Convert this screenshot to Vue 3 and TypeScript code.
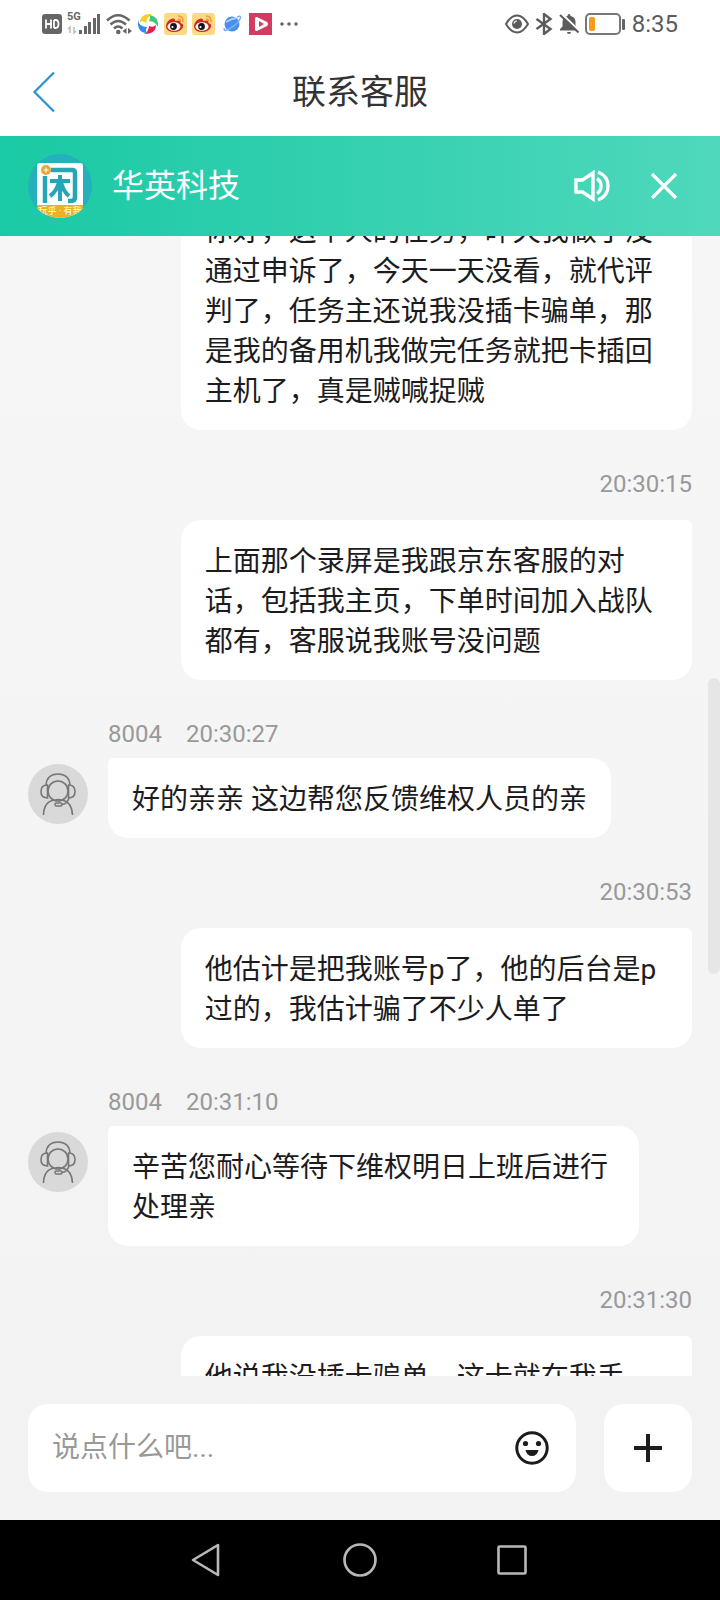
<script setup lang="ts">
import { onMounted, ref } from 'vue'

interface Message {
  id: number
  mine: boolean
  time?: string
  agent?: string
  text: string
}

const messages: Message[] = [
  { id: 1, mine: true, text: '你好，这个人的任务，昨天我做了没通过申诉了，今天一天没看，就代评判了，任务主还说我没插卡骗单，那是我的备用机我做完任务就把卡插回主机了，真是贼喊捉贼' },
  { id: 2, mine: true, time: '20:30:15', text: '上面那个录屏是我跟京东客服的对话，包括我主页，下单时间加入战队都有，客服说我账号没问题' },
  { id: 3, mine: false, agent: '8004', time: '20:30:27', text: '好的亲亲 这边帮您反馈维权人员的亲' },
  { id: 4, mine: true, time: '20:30:53', text: '他估计是把我账号p了，他的后台是p过的，我估计骗了不少人单了' },
  { id: 5, mine: false, agent: '8004', time: '20:31:10', text: '辛苦您耐心等待下维权明日上班后进行处理亲' },
  { id: 6, mine: true, time: '20:31:30', text: '他说我没插卡骗单，这卡就在我手' },
]

const draft = ref('')
const list = ref<HTMLElement | null>(null)

onMounted(() => {
  if (list.value) list.value.scrollTop = 46
})
</script>

<template>
  <div class="screen">
    <div class="status">
      <div class="status-group">
        <svg width="20" height="20" viewBox="0 0 20 20">
          <rect x="0" y="0" width="20" height="20" rx="3" fill="#666" />
          <path d="M4 5.500v9M9 5.500v9M4 10h5M12 6v8M12 6h1.500q3 0 3 4t-3 4H12" fill="none" stroke="#fff" stroke-width="1.800" />
        </svg>
        <div class="signal">
          <span class="net">5G</span>
          <svg width="34" height="22" viewBox="0 0 34 22">
            <g fill="#666">
              <rect x="12" y="17" width="3" height="4" />
              <rect x="17" y="13" width="3" height="8" />
              <rect x="21" y="9" width="3" height="12" />
              <rect x="26" y="5" width="3" height="16" />
              <rect x="30" y="1" width="3" height="20" />
            </g>
            <path d="M3 20v-6l-2 2M7 14v6l2-2" fill="none" stroke="#bbb" stroke-width="1.500" />
          </svg>
        </div>
        <svg width="26" height="22" viewBox="0 0 26 22">
          <g fill="none" stroke="#666" stroke-width="2.600">
            <path d="M1 7.500Q12 -3 23.500 7.500" />
            <path d="M4.500 11.500Q12 4.500 20 11.500" />
            <path d="M8 15.500Q12 11.500 16.500 15.500" />
          </g>
          <circle cx="12.300" cy="19" r="2.300" fill="#666" />
          <path d="M20.500 15v6l-4-3zM22 15v6l4-3z" fill="#666" />
        </svg>
        <svg width="22" height="22" viewBox="0 0 22 22">
          <path d="M3 9Q4 0 15 1Q10 4 9 10Q6 7 3 9z" fill="#f6cf20" />
          <path d="M12 2Q22 3 21 14Q18 8 12 8Q14 4 12 2z" fill="#3fc77c" />
          <path d="M19 12Q19 21 7 21Q12 18 12 13Q16 15 19 12z" fill="#ec1c50" />
          <path d="M1 7Q2 14 10 14Q8 18 10 20Q0 20 1 7z" fill="#3489ee" />
        </svg>
        <svg v-for="n in 2" :key="n" width="23" height="22" viewBox="0 0 23 22">
          <rect width="23" height="22" rx="3" fill="#fbd985" />
          <path d="M2 14Q2 7 9 5.500Q11.500 5 11 8Q17 6.500 16.500 10Q20 11 19 14Q17 19 10 19Q3 19 2 14z" fill="#cf2a1e" />
          <ellipse cx="10" cy="13.500" rx="6.500" ry="4.300" fill="#fff" />
          <circle cx="9.500" cy="13.500" r="3.400" fill="#151515" />
          <circle cx="8.500" cy="14" r="1.100" fill="#fff" />
          <path d="M14 3Q19.500 3 19 9M14 6Q16.500 6 16.500 8.500" fill="none" stroke="#f09a32" stroke-width="1.600" />
        </svg>
        <svg width="24" height="22" viewBox="-1 0 24 22">
          <circle cx="11" cy="11" r="7.500" fill="#4a8ff0" />
          <path d="M5 9Q10 6 15 5" fill="none" stroke="#a6cdfb" stroke-width="2" />
          <path d="M16 4Q21 2 19 6Q17 11 8 16Q2 19 3.500 15" fill="none" stroke="#7bb0f6" stroke-width="1.600" />
        </svg>
        <svg width="23" height="22" viewBox="0 0 23 22">
          <rect width="23" height="22" fill="#d13c60" />
          <path d="M6 5.500Q6 3.500 8 4L18 9Q20 11 18 13L8 18Q6 18.500 6 16.500z" fill="#fff" />
          <path d="M10 8v6l5-3z" fill="#d13c60" />
        </svg>
        <svg width="22" height="22" viewBox="0 0 22 22" fill="#666">
          <circle cx="5" cy="11" r="1.800" /><circle cx="12" cy="11" r="1.800" /><circle cx="19" cy="11" r="1.800" />
        </svg>
      </div>
      <div class="status-group">
        <svg width="24" height="20" viewBox="0 0 24 20">
          <path d="M1 10Q6 1.500 12 1.500T23 10Q18 18.500 12 18.500T1 10z" fill="none" stroke="#5c5c5c" stroke-width="2" />
          <circle cx="12" cy="10" r="5" fill="#5c5c5c" />
          <path d="M9 9.500Q9.500 7 12 7" fill="none" stroke="#fff" stroke-width="1.200" />
        </svg>
        <svg width="20" height="22" viewBox="-1 0 20 22">
          <path d="M1.500 6L15.500 16L9 21V1L15.500 6L1.500 16" fill="none" stroke="#5c5c5c" stroke-width="2.400" />
        </svg>
        <svg width="21" height="22" viewBox="0 0 21 22">
          <path d="M1 17.500V16L3.500 13.500V9Q3.500 4 8.500 3Q8.500 1 10 1T11.500 3Q16.500 4 16.500 9V13.500L19 16V17.500zM8 19h4Q12 21 10 21T8 19z" fill="#5c5c5c" />
          <path d="M1 -1L21 18.500" stroke="#fff" stroke-width="2" />
          <path d="M1 2L19.500 19.500" stroke="#5c5c5c" stroke-width="2" />
        </svg>
        <svg width="42" height="22" viewBox="0 0 42 22">
          <rect x="1" y="1" width="34" height="20" rx="4" fill="none" stroke="#777" stroke-width="2" />
          <rect x="4" y="4" width="6" height="14" rx="2" fill="#f89b1c" />
          <rect x="37" y="6" width="3" height="11" rx="1" fill="#666" />
        </svg>
        <span class="clock">8:35</span>
      </div>
    </div>

    <header class="titlebar">
      <button class="icon-button" type="button" aria-label="返回">
        <svg width="24" height="42" viewBox="0 0 24 42">
          <path d="M22 1.500L2.500 21L22 40.500" fill="none" stroke="#2a93cf" stroke-width="2.200" />
        </svg>
      </button>
      <h1>联系客服</h1>
      <span class="spacer"></span>
    </header>

    <div class="brand">
      <svg class="logo" width="64" height="64" viewBox="0 0 64 64">
        <defs>
          <clipPath id="disc"><circle cx="32" cy="32" r="32" /></clipPath>
        </defs>
        <g clip-path="url(#disc)">
          <rect width="64" height="64" fill="#25b0bb" />
          <rect x="9" y="9" width="46" height="60" rx="3" fill="#fff" />
          <rect x="9" y="51" width="46" height="13" fill="#eeb023" />
          <g fill="none" stroke="#25a5b5" stroke-width="4.500">
            <path d="M17 22V49" />
            <path d="M23 16H44Q47 16 47 19V43Q47 47 43 47H40" />
            <path d="M22 27H42M32 21V47M31 28Q29 37 22 42M33 28Q35 37 41 42" stroke-width="4" />
          </g>
          <circle cx="18" cy="16" r="5" fill="#e9a638" />
          <path d="M18 13.500v5M15.500 16h5" stroke="#fff" stroke-width="1.200" />
          <text x="32" y="60" text-anchor="middle" fill="#fff" class="logo-text">玩乎 · 有我</text>
        </g>
      </svg>
      <h2>华英科技</h2>
      <button class="icon-button" type="button" aria-label="声音">
        <svg width="38" height="34" viewBox="1 0 38 34" fill="none" stroke="#fff" stroke-width="3.400">
          <path d="M3 11H9.500L20 4V30L9.500 23H3z" />
          <path d="M24 9.500Q28 12 28 17T24 24.500" />
          <path d="M25 3Q35 7 35 17T25 31" />
        </svg>
      </button>
      <button class="icon-button close" type="button" aria-label="关闭">
        <svg width="28" height="28" viewBox="0 0 28 28">
          <path d="M2 2L26 26M26 2L2 26" stroke="#fff" stroke-width="3.200" />
        </svg>
      </button>
    </div>

    <main class="chat">
      <div ref="list" class="list">
        <article v-for="m in messages" :key="m.id" class="message" :class="m.mine ? 'mine' : 'theirs'">
          <div v-if="m.time" class="meta">
            <span v-if="m.agent">{{ m.agent }}</span>
            <time>{{ m.time }}</time>
          </div>
          <div class="row">
            <svg v-if="!m.mine" class="avatar" width="60" height="60" viewBox="0 0 60 60">
              <circle cx="30" cy="30" r="30" fill="#d9d9d9" />
              <g fill="none" stroke="#777" stroke-width="1.600">
                <circle cx="30" cy="27" r="10" />
                <path d="M18 21Q19 10 30 10T42 21" />
                <path d="M19.500 21V34Q13 34 13 27.500T19.500 21zM40.500 21V34Q47 34 47 27.500T40.500 21z" />
                <path d="M15.500 51Q16 37 27 36Q30 35 34 36Q44 38 44.500 51" />
                <path d="M41 34Q39 40 34 40.500" />
                <rect x="27" y="39" width="7" height="3" rx="1.500" />
              </g>
            </svg>
            <p class="bubble">{{ m.text }}</p>
          </div>
        </article>
      </div>
      <span class="thumb"></span>
    </main>

    <form class="composer" @submit.prevent>
      <div class="field">
        <input v-model="draft" type="text" aria-label="消息" placeholder="说点什么吧..." />
        <button class="icon-button" type="button" aria-label="表情">
          <svg width="34" height="34" viewBox="0 0 34 34">
            <circle cx="17" cy="17" r="15.200" fill="none" stroke="#1c1c1e" stroke-width="3" />
            <circle cx="10.500" cy="12.500" r="2.600" fill="#1c1c1e" />
            <circle cx="23.500" cy="12.500" r="2.600" fill="#1c1c1e" />
            <path d="M10.500 19H23.500Q22 25 17 25T10.500 19z" fill="#1c1c1e" />
          </svg>
        </button>
      </div>
      <button class="plus" type="button" aria-label="更多">
        <svg width="28" height="28" viewBox="0 0 28 28">
          <path d="M14 0V28M0 14H28" stroke="#1c1c1e" stroke-width="4" />
        </svg>
      </button>
    </form>

    <nav class="navbar">
      <button class="icon-button" type="button" aria-label="后退">
        <svg width="34" height="36" viewBox="0 0 34 36">
          <path d="M27 3V33L2 18z" fill="none" stroke="#b8b8b8" stroke-width="2.600" stroke-linejoin="round" />
        </svg>
      </button>
      <button class="icon-button" type="button" aria-label="主页">
        <svg width="34" height="34" viewBox="0 0 34 34">
          <circle cx="17" cy="17" r="15.500" fill="none" stroke="#b8b8b8" stroke-width="2.600" />
        </svg>
      </button>
      <button class="icon-button" type="button" aria-label="最近任务">
        <svg width="34" height="34" viewBox="0 0 34 34">
          <rect x="3.500" y="3.500" width="27" height="27" rx="1" fill="none" stroke="#b8b8b8" stroke-width="2.600" />
        </svg>
      </button>
    </nav>
  </div>
</template>

<style>
body {
  margin: 0;
}
</style>

<style scoped>
.screen {
  display: flex;
  flex-direction: column;
  height: 100vh;
  background: linear-gradient(#f7f7f7, #f2f2f2);
  color: #1c1c1e;
  font-family: Roboto, "Noto Sans CJK SC", sans-serif;
}

svg {
  display: block;
  flex: none;
}

.status {
  display: flex;
  justify-content: space-between;
  align-items: center;
  height: 48px;
  padding: 0 42px;
  background: #fff;
}

.status-group {
  display: flex;
  align-items: center;
  gap: 5px;
}

.signal {
  position: relative;
}

.net {
  position: absolute;
  top: -2px;
  left: 0;
  color: #666;
  font-size: 11px;
  font-weight: 700;
  line-height: 12px;
}

.clock {
  color: #5c5c5c;
  font-size: 24px;
  line-height: 32px;
}

.titlebar {
  display: flex;
  justify-content: space-between;
  align-items: center;
  height: 88px;
  padding: 0 32px;
  background: #fff;
}

.spacer {
  width: 24px;
}

h1,
h2 {
  margin: 0;
  font-weight: 400;
}

h1 {
  color: #333;
  font-size: 34px;
  line-height: 48px;
}

.icon-button {
  padding: 0;
  border: 0;
  background: none;
}

.brand {
  display: flex;
  align-items: center;
  height: 100px;
  padding: 0 42px 0 28px;
  background: linear-gradient(90deg, #1ac9a5, #4fd8bc);
}

.logo-text {
  font-size: 9px;
}

h2 {
  flex: 1;
  margin-left: 20px;
  color: #fff;
  font-size: 32px;
  line-height: 44px;
}

.close {
  margin-left: 38px;
}

.chat {
  position: relative;
  flex: 1;
  min-height: 0;
}

.list {
  height: 100%;
  overflow-y: auto;
  scrollbar-width: none;
}

.thumb {
  position: absolute;
  top: 442px;
  right: 0;
  width: 12px;
  height: 296px;
  border-radius: 6px;
  background: #e6e6e6;
}

.message {
  padding: 0 28px;
}

.message + .message {
  padding-top: 36px;
}

.meta {
  display: flex;
  gap: 24px;
  color: #999;
  font-size: 24px;
  line-height: 36px;
}

.mine .meta {
  justify-content: flex-end;
  margin-bottom: 18px;
}

.theirs .meta {
  margin: 0 0 6px 80px;
}

.row {
  display: flex;
  align-items: flex-start;
}

.mine .row {
  justify-content: flex-end;
}

.avatar {
  margin: 6px 20px 0 0;
}

.bubble {
  box-sizing: border-box;
  margin: 0;
  padding: 22px 24px 18px;
  background: #fff;
  font-size: 28px;
  line-height: 40px;
}

.mine .bubble {
  width: 77%;
  border-radius: 20px 6px 20px 20px;
}

.theirs .bubble {
  max-width: 80%;
  border-radius: 6px 20px 20px 20px;
}

.composer {
  display: flex;
  gap: 28px;
  padding: 28px;
}

.field {
  display: flex;
  flex: 1;
  align-items: center;
  min-width: 0;
  padding: 0 27px 0 24px;
  border-radius: 20px;
  background: #fff;
}

input {
  flex: 1;
  min-width: 0;
  padding: 0;
  border: 0;
  outline: 0;
  background: none;
  color: #1c1c1e;
  font-family: inherit;
  font-size: 28px;
  line-height: 40px;
}

input::placeholder {
  color: #999;
  opacity: 1;
}

.plus {
  display: flex;
  justify-content: center;
  align-items: center;
  width: 88px;
  height: 88px;
  padding: 0;
  border: 0;
  border-radius: 20px;
  background: #fff;
}

.navbar {
  display: flex;
  justify-content: center;
  align-items: center;
  gap: 118px;
  height: 80px;
  background: #000;
}
</style>
